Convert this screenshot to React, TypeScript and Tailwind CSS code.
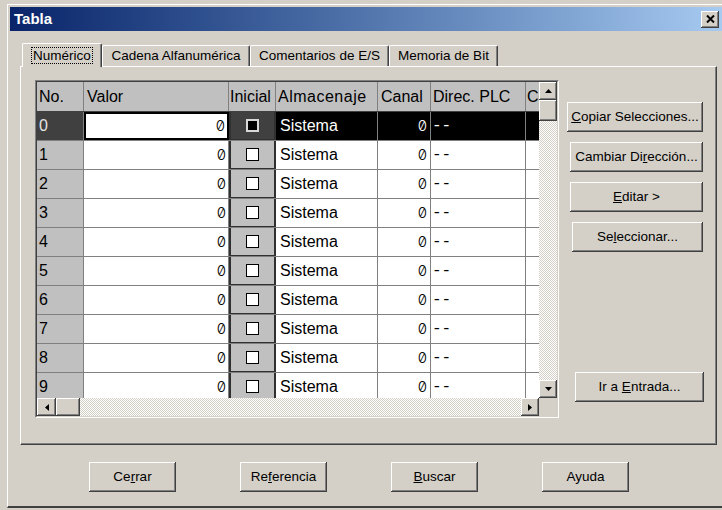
import type { ReactNode } from "react";

const raised =
  "bg-[#d4d0c8] shadow-[inset_-1px_-1px_#404040,inset_1px_1px_#ffffff,inset_-2px_-2px_#808080,inset_2px_2px_#d4d0c8]";
const dither =
  "bg-[conic-gradient(#ffffff_25%,#d4d0c8_0_50%,#ffffff_0_75%,#d4d0c8_0)] bg-[length:2px_2px]";

function Button({ children, className = "" }: { children: ReactNode; className?: string }) {
  return (
    <button
      type="button"
      className={`${raised} flex h-[30px] items-center justify-center text-[13.5px] leading-none text-black ${className}`}
    >
      <span className="whitespace-pre">{children}</span>
    </button>
  );
}

function Arrow({ dir }: { dir: "up" | "down" | "left" | "right" }) {
  const points = {
    up: "0,4 7,4 3.5,0",
    down: "0,0 7,0 3.5,4",
    left: "4,0 4,7 0,3.5",
    right: "0,0 0,7 4,3.5",
  }[dir];
  const vertical = dir === "up" || dir === "down";
  return (
    <svg width={vertical ? 7 : 4} height={vertical ? 4 : 7} viewBox={vertical ? "0 0 7 4" : "0 0 4 7"}>
      <polygon points={points} fill="#000" />
    </svg>
  );
}

function ScrollButton({ dir, className = "" }: { dir: "up" | "down" | "left" | "right"; className?: string }) {
  return (
    <div className={`${raised} flex shrink-0 items-center justify-center ${className}`}>
      <Arrow dir={dir} />
    </div>
  );
}

// slashed zero like the PLC tool's numeric cells
const zero = "font-['Inter',sans-serif] text-[15px] [font-feature-settings:'zero'] font-light";
const dash = "font-['Liberation_Mono',monospace] text-[16px]";

function Row({ n, selected }: { n: number; selected?: boolean }) {
  const text = selected ? "bg-black text-white" : "bg-white text-black";
  return (
    <div className="flex h-[29px] shrink-0 border-b border-[#808080]">
      <div
        className={`flex w-[47px] items-center border-r border-[#808080] pl-[2px] ${
          selected ? "bg-[#404040] text-[#e4e4e4]" : "bg-[#c0c0c0] text-black"
        }`}
      >
        {n}
      </div>
      <div
        className={`flex w-[145px] items-center justify-end bg-white pr-[2px] ${zero} ${
          selected ? "border-2 border-black" : "border-r border-[#808080]"
        }`}
      >
        0
      </div>
      <div
        className={`flex w-[47px] items-center justify-center border-x-2 border-b border-[#303030] ${
          selected ? "bg-[#404040]" : "bg-[#c0c0c0]"
        }`}
      >
        <div
          className={
            selected
              ? "h-[13px] w-[13px] border-2 border-[#d8d8d8] bg-black"
              : "h-[13px] w-[13px] border border-black bg-white"
          }
        />
      </div>
      <div className={`flex w-[102px] items-center border-r border-[#808080] pl-[4px] ${text}`}>Sistema</div>
      <div className={`flex w-[53px] items-center justify-end border-r border-[#808080] pr-[3px] ${zero} ${text}`}>
        0
      </div>
      <div className={`flex w-[95px] items-center border-r border-[#808080] pl-[1px] ${dash} ${text}`}>--</div>
      <div className={`w-[13px] ${text}`} />
    </div>
  );
}

function Grid() {
  return (
    <div className="self-start border border-b-white border-l-[#808080] border-r-white border-t-[#808080]">
      <div className="flex h-[336px] w-[522px] border border-b-[#d4d0c8] border-l-[#404040] border-r-[#d4d0c8] border-t-[#404040] text-[16px]">
        <div className="flex w-[502px] flex-col">
          <div className="flex h-[316px] flex-col overflow-hidden">
            <div className="flex h-[30px] shrink-0 border-b border-[#404040] bg-[#c0c0c0]">
              <div className="flex w-[47px] items-center border-r border-[#808080] pl-[2px]">No.</div>
              <div className="flex w-[145px] items-center border-r border-[#808080] pl-[3px]">Valor</div>
              <div className="flex w-[47px] items-center border-r border-[#808080] pl-[1px]">Inicial</div>
              <div className="flex w-[102px] items-center border-r border-[#808080] pl-[2px] tracking-[0.5px]">
                Almacenaje
              </div>
              <div className="flex w-[53px] items-center border-r border-[#808080] pl-[3px]">Canal</div>
              <div className="flex w-[95px] items-center border-r border-[#808080] pl-[2px]">Direc. PLC</div>
              <div className="flex w-[13px] items-center overflow-hidden whitespace-nowrap pl-[1px]">Comentario</div>
            </div>
            {Array.from({ length: 10 }, (_, i) => (
              <Row key={i} n={i} selected={i === 0} />
            ))}
          </div>
          <div className="flex h-[18px]">
            <ScrollButton dir="left" className="w-[19px]" />
            <div className={`${raised} w-[24px] shrink-0`} />
            <div className={`flex-1 ${dither}`} />
            <ScrollButton dir="right" className="w-[18px]" />
          </div>
        </div>
        <div className="flex w-[18px] flex-col">
          <div className="flex h-[316px] flex-col">
            <ScrollButton dir="up" className="h-[18px]" />
            <div className={`${raised} h-[21px] shrink-0`} />
            <div className={`flex-1 ${dither}`} />
            <ScrollButton dir="down" className="h-[18px]" />
          </div>
          <div className="h-[18px] bg-[#d4d0c8]" />
        </div>
      </div>
    </div>
  );
}

function Tab({ children, selected, className = "" }: { children: ReactNode; selected?: boolean; className?: string }) {
  return (
    <div
      className={`flex items-center justify-center rounded-t-[2px] border-l border-r border-t border-white border-r-[#404040] bg-[#d4d0c8] shadow-[inset_-1px_0_#808080] ${
        selected ? "relative z-10 -mb-px h-[24px]" : "h-[21px]"
      } ${className}`}
    >
      {children}
    </div>
  );
}

export default function App() {
  return (
    <div className="h-[510px] w-[722px] overflow-hidden bg-[#d4d0c8] pt-[4px] pl-[7px] font-['Liberation_Sans',Arial,sans-serif] text-black">
      <div className="flex h-[504px] flex-col border-b-2 border-l border-t border-b-[#404040] border-l-white border-t-white pl-[2px] pt-[2px]">
        <div className="flex h-[24px] shrink-0 items-center justify-between bg-gradient-to-r from-[#0a246a] to-[#a6caf0] pl-[4px] pr-[3px]">
          <span className="text-[15px] font-bold text-white">Tabla</span>
          <div className={`${raised} flex h-[17px] w-[18px] items-center justify-center`}>
            <svg width="9" height="8" viewBox="0 0 9 8">
              <path d="M1 0.5 L8 7.5 M8 0.5 L1 7.5" stroke="#000" strokeWidth="2" />
            </svg>
          </div>
        </div>

        <div className="mt-[12px] flex items-end pl-[12px] text-[13.5px]">
          <Tab selected className="w-[80px]">
            <span className="border border-dotted border-black px-[1px] leading-[15px]">Numérico</span>
          </Tab>
          <Tab className="w-[148px]">Cadena Alfanumérica</Tab>
          <Tab className="w-[139px]">Comentarios de E/S</Tab>
          <Tab className="w-[109px]">Memoria de Bit</Tab>
        </div>

        <div className="ml-[10px] mr-[5px] flex h-[379px] shrink-0 items-start border-b border-l border-r border-t border-b-[#404040] border-l-white border-r-[#404040] border-t-white pl-[14px] pt-[13px] shadow-[inset_-1px_-1px_#808080]">
          <Grid />
          <div className="ml-[8px] flex flex-col pt-[22px]">
            <Button className="w-[136px]">
              <span className="underline">C</span>opiar Selecciones...
            </Button>
            <Button className="ml-[3px] mt-[10px] w-[133px]">
              Cambiar Di<span className="underline">r</span>ección...
            </Button>
            <Button className="ml-[3px] mt-[10px] w-[133px]">
              <span className="underline">E</span>ditar &gt;
            </Button>
            <Button className="ml-[5px] mt-[10px] w-[131px]">
              Se<span className="underline">l</span>eccionar...
            </Button>
            <Button className="ml-[8px] mt-[120px] w-[129px]">
              Ir a <span className="underline">E</span>ntrada...
            </Button>
          </div>
        </div>

        <div className="mt-[17px] flex gap-[64px] pl-[79px]">
          <Button className="w-[87px]">
            Ce<span className="underline">r</span>rar
          </Button>
          <Button className="w-[87px]">
            Re<span className="underline">f</span>erencia
          </Button>
          <Button className="w-[87px]">
            <span className="underline">B</span>uscar
          </Button>
          <Button className="w-[87px]">Ayuda</Button>
        </div>
      </div>
    </div>
  );
}
